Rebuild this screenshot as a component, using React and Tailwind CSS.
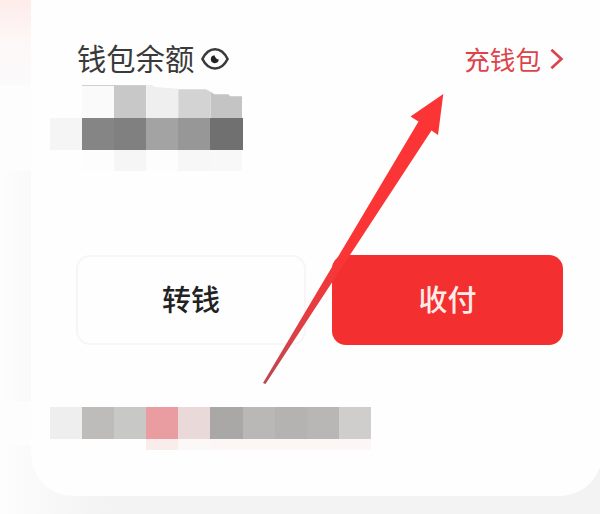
const balanceTop = [
  { color: '#fafafa', clip: 'none' },
  { color: '#c8c8c8', clip: 'none' },
  { color: '#efefef', clip: 'polygon(0 0, 18% 0, 28% 6%, 100% 11%, 100% 100%, 0 100%)' },
  { color: '#d3d3d3', clip: 'polygon(0 13%, 86% 13%, 100% 20%, 100% 100%, 0 100%)' },
  { color: '#c4c4c4', clip: 'polygon(0 20%, 12% 28%, 56% 28%, 62% 34%, 100% 34%, 100% 100%, 0 100%)' },
];
const balanceMiddle = ['#f5f5f5', '#858585', '#808080', '#a3a3a3', '#979797', '#707070'];
const balanceBottom = ['#fdfdfd', '#f6f6f6', '#fdfdfd', '#f7f7f7', '#f8f8f8'];

const detailTop = [
  '#eeeeee', '#bdbcbb', '#c8c8c6', '#e99da1', '#e9d9d8',
  '#a9a8a6', '#b9b8b6', '#b4b3b1', '#b8b7b5', '#cfcecd',
];
const detailBottom = ['#fbecec', '#fdf8f8', '#fcf6f5', '#fcf6f5', '#fcf6f5', '#fcf6f5', '#fcf7f6'];

const EyeIcon = () => (
  <svg width="30" height="24" viewBox="0 0 30 24" fill="none">
    <path
      d="M2.4 12C5.8 5.2 10 2.3 15 2.3S24.2 5.2 27.6 12C24.2 18.8 20 21.5 15 21.5S5.8 18.8 2.4 12Z"
      stroke="#3a3a3a"
      strokeWidth="2.6"
      strokeLinejoin="round"
    />
    <path d="M14.4 8.2A4 4 0 1 0 18.8 12.6C16.8 12.4 15 10.4 14.4 8.2Z" fill="#222" />
  </svg>
);

const ChevronIcon = () => (
  <svg width="14" height="24" viewBox="0 0 14 24" fill="none" stroke="currentColor" strokeWidth="2.7">
    <path d="M1.4 2.8L11.4 12L1.4 21.2" />
  </svg>
);

const MosaicRow = ({ colors, className }) => (
  <div className={`flex ${className}`}>
    {colors.map((color, i) => (
      <div key={i} className="w-[32.1px] h-full shrink-0" style={{ backgroundColor: color }} />
    ))}
  </div>
);

const BalanceMosaic = () => (
  <div className="ml-[19px] mt-[8px] h-[86px]">
    <div className="flex h-[33px] pl-[32px]">
      {balanceTop.map((cell, i) => (
        <div
          key={i}
          className={`w-[32.1px] h-full shrink-0 ${i < 2 ? 'border-t border-[#cfcfcf]' : ''}`}
          style={{ backgroundColor: cell.color, clipPath: cell.clip }}
        />
      ))}
    </div>
    <MosaicRow colors={balanceMiddle} className="h-8" />
    <MosaicRow colors={balanceBottom} className="h-[21px] pl-[32px]" />
  </div>
);

const DetailMosaic = () => (
  <div className="ml-[19px] mt-[62px]">
    <MosaicRow colors={detailTop} className="h-8" />
    <MosaicRow colors={detailBottom} className="h-[11px] pl-[96px]" />
  </div>
);

const Arrow = () => (
  <svg className="absolute left-0 top-0 pointer-events-none" width="600" height="514" viewBox="0 0 600 514">
    <defs>
      <linearGradient id="arrow" gradientUnits="userSpaceOnUse" x1="264" y1="383" x2="345" y2="255">
        <stop offset="0" stopColor="#b84a52" />
        <stop offset="0.4" stopColor="#dd3f45" />
        <stop offset="1" stopColor="#fb3536" />
      </linearGradient>
    </defs>
    <path d="M443.3 94L410.5 116.5L418.5 121.5L263 383L265.5 384L431.5 130.5L438 135Z" fill="url(#arrow)" />
  </svg>
);

export default function App() {
  return (
    <div className="relative w-[600px] h-[514px] overflow-hidden bg-linear-to-r from-[#fdfdfd] to-[#f3f3f3] to-18% font-['Noto_Sans_CJK_SC','Noto_Sans',sans-serif]">
      <div className="flex h-full">
        {/* page edge left of the card, with blurred strips beside the mosaics */}
        <div className="w-[31px] shrink-0">
          <div className="h-[85px] bg-linear-to-b from-[#fdecea] via-[#fdf8f7] to-[#fbfbfb]" />
          <div className="h-[86px] bg-[#fdfdfd]" />
          <div className="h-[230px] bg-linear-to-r from-[#fdfdfd] to-[#f9f9f9]" />
          <div className="h-[44px] bg-[#fdfdfd]" />
        </div>
        <div className="w-[571px] h-[496px] shrink-0 rounded-b-[42px] bg-[#fefefe]">
          <div className="flex items-center justify-between h-[40px] mt-[37px] pl-[46px] pr-[38px]">
            <div className="flex items-center gap-[6px]">
              <span className="text-[29.3px] leading-10 text-[#3a3a3a]">钱包余额</span>
              <div className="pt-1">
                <EyeIcon />
              </div>
            </div>
            <div className="flex items-center gap-[9px] pt-[3px] text-[#dd434a]">
              <span className="text-[25.6px] leading-10">充钱包</span>
              <ChevronIcon />
            </div>
          </div>

          <BalanceMosaic />

          <div className="flex gap-[26px] pl-[45px] mt-[84px]">
            <button className="w-[230px] h-[90px] pb-[2px] rounded-[14px] border-2 border-[#f6f6f6] text-[29px] font-medium text-[#222]">
              转钱
            </button>
            <button className="w-[231px] h-[90px] pb-[2px] rounded-[14px] bg-[#f3302f] text-[29px] font-medium text-[#ffeceb]">
              收付
            </button>
          </div>

          <DetailMosaic />
        </div>
      </div>
      <Arrow />
    </div>
  );
}
